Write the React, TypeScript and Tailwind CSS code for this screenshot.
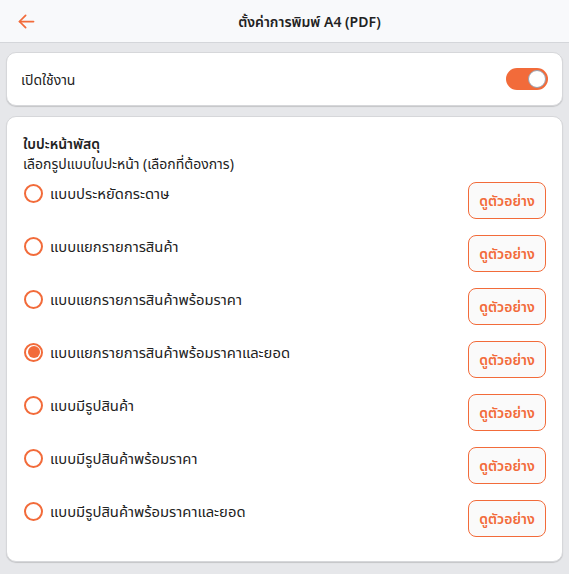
import React, { useState } from 'react';

const OPTIONS = [
    'แบบประหยัดกระดาษ',
    'แบบแยกรายการสินค้า',
    'แบบแยกรายการสินค้าพร้อมราคา',
    'แบบแยกรายการสินค้าพร้อมราคาและยอด',
    'แบบมีรูปสินค้า',
    'แบบมีรูปสินค้าพร้อมราคา',
    'แบบมีรูปสินค้าพร้อมราคาและยอด',
];

const App: React.FC = () => {
    const [enabled, setEnabled] = useState(true);
    const [selected, setSelected] = useState(3);

    return (
        <div className="min-h-screen bg-[#e6e7ea] text-[#222] font-['Noto_Sans','Noto_Sans_Thai',sans-serif]">
            {/* Header */}
            <div className="h-[43px] bg-[#f8f9fb] border-b border-[#d4d6da] flex items-center">
                <button className="w-[42px] h-full flex items-center pl-[16px] text-[#f26b3a]">
                    <svg width="21" height="21" viewBox="0 0 24 24" fill="none" stroke="currentColor" strokeWidth="2" strokeLinecap="round" strokeLinejoin="round">
                        <path d="M20 12H4" />
                        <path d="M11 5l-7 7 7 7" />
                    </svg>
                </button>
                <h1 className="flex-1 text-center text-[14px] font-semibold pl-[8px]">ตั้งค่าการพิมพ์ A4 (PDF)</h1>
            </div>

            <div className="px-[6px] pt-[9px] pb-3 space-y-[10px]">
                {/* Enable */}
                <div className="bg-white rounded-[10px] border border-[#d6d7da] shadow-[0_1px_1px_rgba(0,0,0,0.15)] h-[54px] px-[14px] flex items-center justify-between">
                    <span className="text-[14px]">เปิดใช้งาน</span>
                    <button
                        onClick={() => setEnabled(!enabled)}
                        className={`w-[42px] h-[22px] rounded-full relative ${enabled ? 'bg-[#f26b3a]' : 'bg-gray-300'}`}
                    >
                        <span className={`absolute top-[2px] w-[18px] h-[18px] rounded-full bg-white border border-gray-400 ${enabled ? 'right-[2px]' : 'left-[2px]'}`} />
                    </button>
                </div>

                {/* Label options */}
                <div className="bg-white rounded-[10px] border border-[#d6d7da] shadow-[0_1px_1px_rgba(0,0,0,0.15)] px-[16px] pt-[17px] pb-[24px]">
                    <h2 className="text-[14px] font-semibold leading-[20px]">ใบปะหน้าพัสดุ</h2>
                    <p className="text-[14px] leading-[20px]">เลือกรูปแบบใบปะหน้า (เลือกที่ต้องการ)</p>
                    <div className="mt-[8px] space-y-[16px]">
                        {OPTIONS.map((opt, i) => (
                            <div key={opt} className="flex items-start justify-between">
                                <label className="flex items-center gap-[7px] cursor-pointer h-[22px]" onClick={() => setSelected(i)}>
                                    <span className="ml-[1px] w-[19px] h-[19px] rounded-full border-[2px] border-[#f26b3a] flex items-center justify-center">
                                        {selected === i && <span className="w-[12px] h-[12px] rounded-full bg-[#f26b3a]" />}
                                    </span>
                                    <span className="text-[14.8px]">{opt}</span>
                                </label>
                                <button className="w-[78px] h-[37px] rounded-lg border border-[#f26b3a] bg-[#fafafa] text-[#f26b3a] text-[14px] font-semibold">
                                    ดูตัวอย่าง
                                </button>
                            </div>
                        ))}
                    </div>
                </div>
            </div>
        </div>
    );
};

export default App;
